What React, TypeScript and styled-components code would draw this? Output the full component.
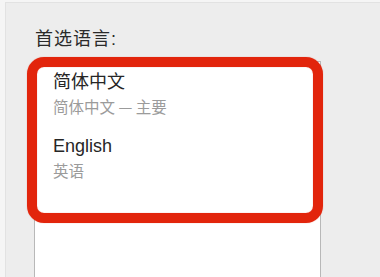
import React from "react"
import styled, { createGlobalStyle } from "styled-components"

const GlobalStyle = createGlobalStyle`
  html, body {
    margin: 0;
    padding: 0;
    background: #f5f5f5;
  }
  body {
    font-family: "Liberation Sans", "Noto Sans CJK SC", sans-serif;
    overflow: hidden;
  }
`

const Panel = styled.div`
  box-sizing: border-box;
  margin: 2px 0 0 5px;
  height: 275px;
  padding: 24px 0 0 28px;
  background: #ededed;
  border-top: 1px solid #e2e2e2;
  border-left: 1px solid #e2e2e2;
  overflow: hidden;
`

const Label = styled.div`
  font-size: 18px;
  line-height: 24px;
  letter-spacing: 1px;
  color: #2a2a2a;
  padding-left: 1px;
  margin-bottom: 10px;
`

const LanguageList = styled.div`
  position: relative;
  box-sizing: border-box;
  width: 287px;
  height: 216px;
  padding: 8px 0 0 18px;
  background: #ffffff;
  border: 1px solid #b8b8b8;
  border-bottom: none;
  display: flex;
  flex-direction: column;
  gap: 16px;
`

const Row = styled.div`
  display: flex;
  flex-direction: column;
`

const Name = styled.div`
  font-size: 18px;
  line-height: 24px;
  color: #262626;
`

const Sub = styled.div`
  font-family: "Noto Sans CJK SC", "Liberation Sans", sans-serif;
  font-size: 15.5px;
  line-height: 24px;
  color: #9b9b9b;
`

const Highlight = styled.div`
  position: absolute;
  left: -8px;
  top: -5px;
  box-sizing: border-box;
  width: 296px;
  height: 166px;
  border: 10px solid #e2250c;
  border-radius: 17px;
  box-shadow: 0 0 1px rgba(226, 37, 12, 0.5), inset 0 0 1px rgba(226, 37, 12, 0.5);
  pointer-events: none;
`

const languages = [
  { name: "简体中文", sub: "简体中文 — 主要" },
  { name: "English", sub: "英语" },
]

export default function App() {
  return (
    <>
      <GlobalStyle />
      <Panel>
        <Label>首选语言:</Label>
        <LanguageList>
          {languages.map((l) => (
            <Row key={l.name}>
              <Name>{l.name}</Name>
              <Sub>{l.sub}</Sub>
            </Row>
          ))}
          <Highlight />
        </LanguageList>
      </Panel>
    </>
  )
}
